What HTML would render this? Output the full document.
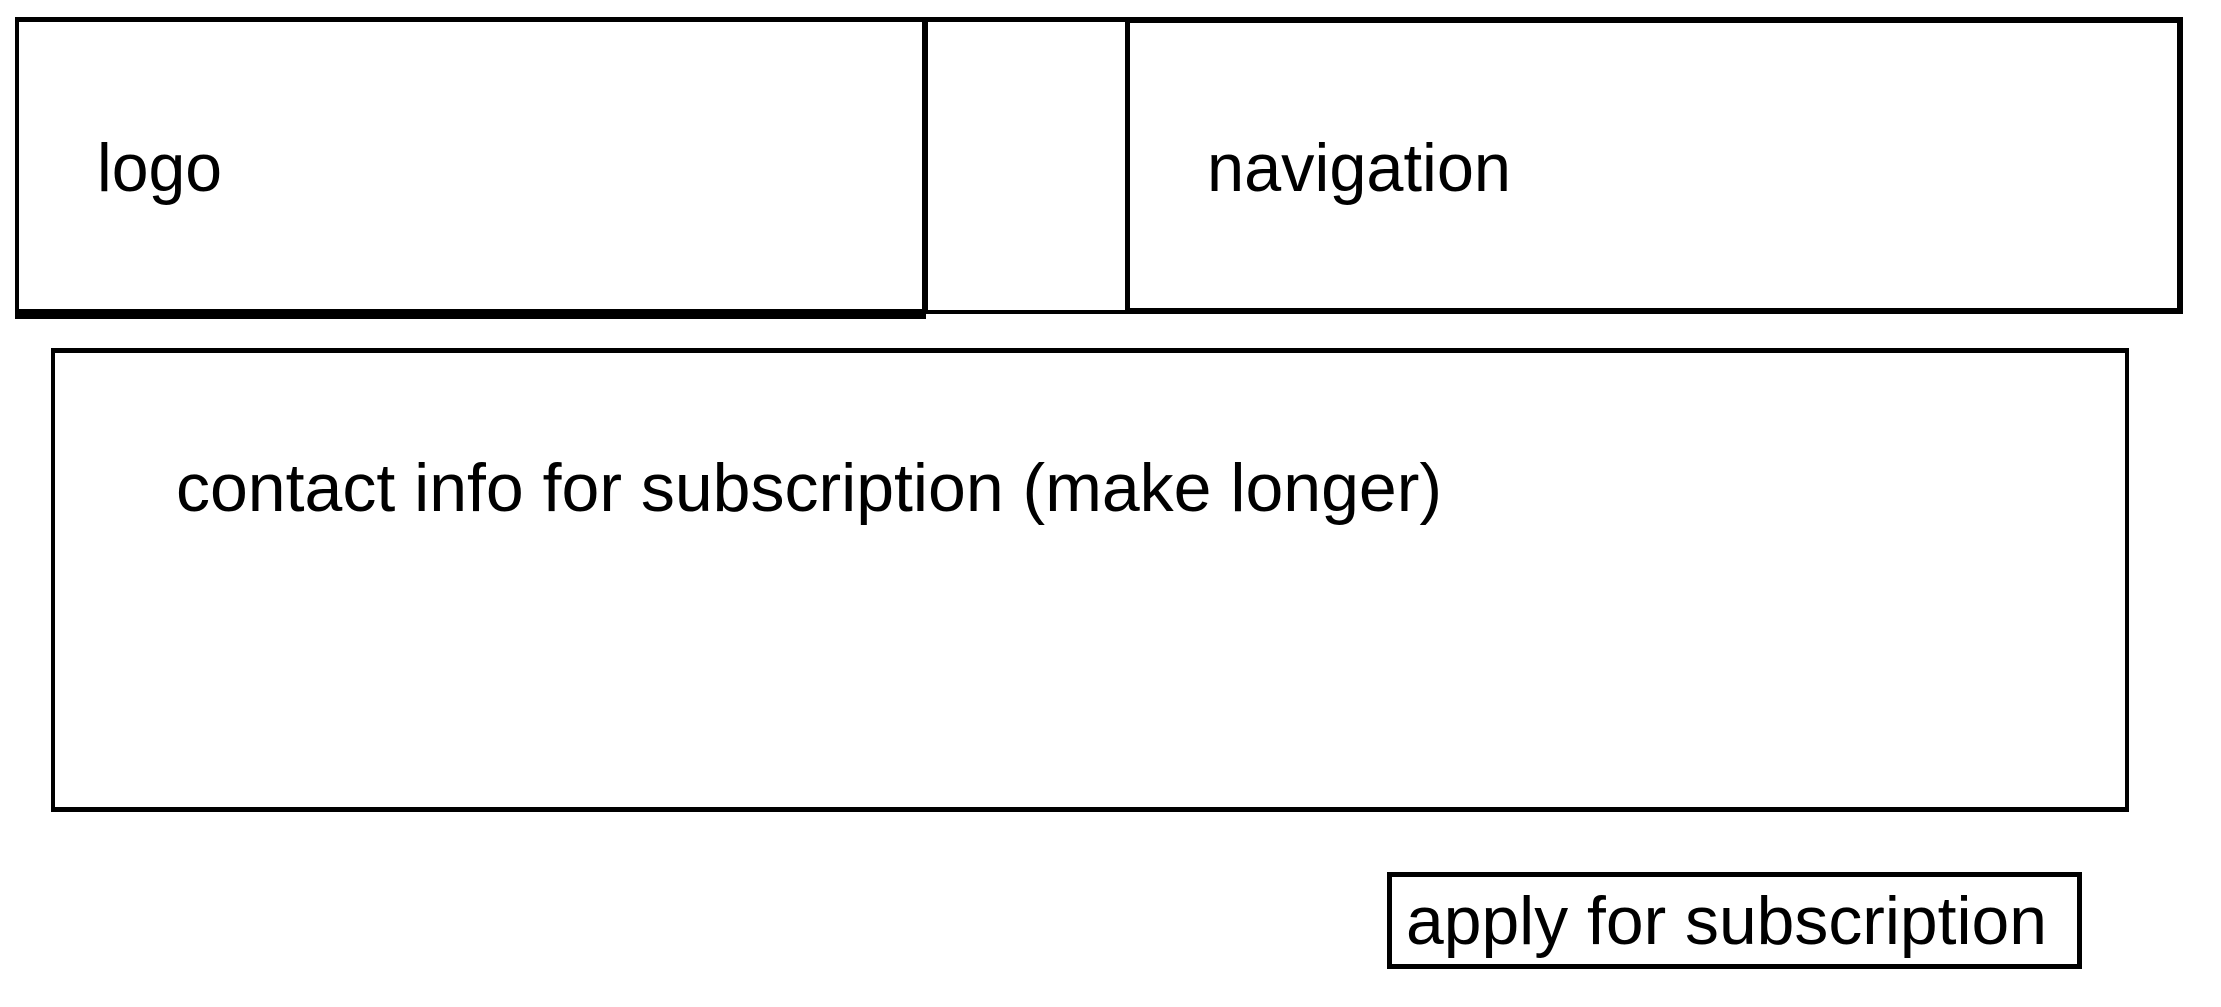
<!DOCTYPE html>
<html><head><meta charset="utf-8"><style>
html,body{margin:0;padding:0;background:#fff;width:2221px;height:1007px;overflow:hidden;position:relative}
.b{position:absolute;box-sizing:border-box;border:5px solid #000}
.t{position:absolute;font-family:"Liberation Sans",sans-serif;font-size:68px;line-height:68px;white-space:nowrap;transform-origin:0 0;color:#000}
</style></head><body>
<div class="b" style="left:15px;top:17px;width:911px;height:297px;border-width:5px 4px 5px 4px"></div>
<div class="b" style="left:15px;top:313px;width:911px;height:6px;border:0;background:#000"></div>
<div class="b" style="left:924px;top:17px;width:205px;height:297px;border-width:5px 0 4px 4px"></div>
<div class="b" style="left:1125px;top:17px;width:1058px;height:297px;border-width:6px 6px 6px 5px"></div>
<div class="b" style="left:51px;top:348px;width:2078px;height:464px;border-width:5px 4px 5px 4px"></div>
<div class="b" style="left:1387px;top:872px;width:695px;height:97px;border-width:5px"></div>
<span class="t" id="t1" data-w="125" style="left:97px;top:134px">logo</span>
<span class="t" id="t2" data-w="304" style="left:1207px;top:134px">navigation</span>
<span class="t" id="t3" data-w="1266" style="left:176px;top:454px">contact info for subscription (make longer)</span>
<span class="t" id="t4" data-w="641" style="left:1406px;top:887px">apply for subscription</span>
<script>
document.querySelectorAll('.t').forEach(function(e){var w=+e.getAttribute('data-w');var r=e.getBoundingClientRect().width;if(r>0)e.style.transform='scaleX('+(w/r)+')';});
</script>
</body></html>
